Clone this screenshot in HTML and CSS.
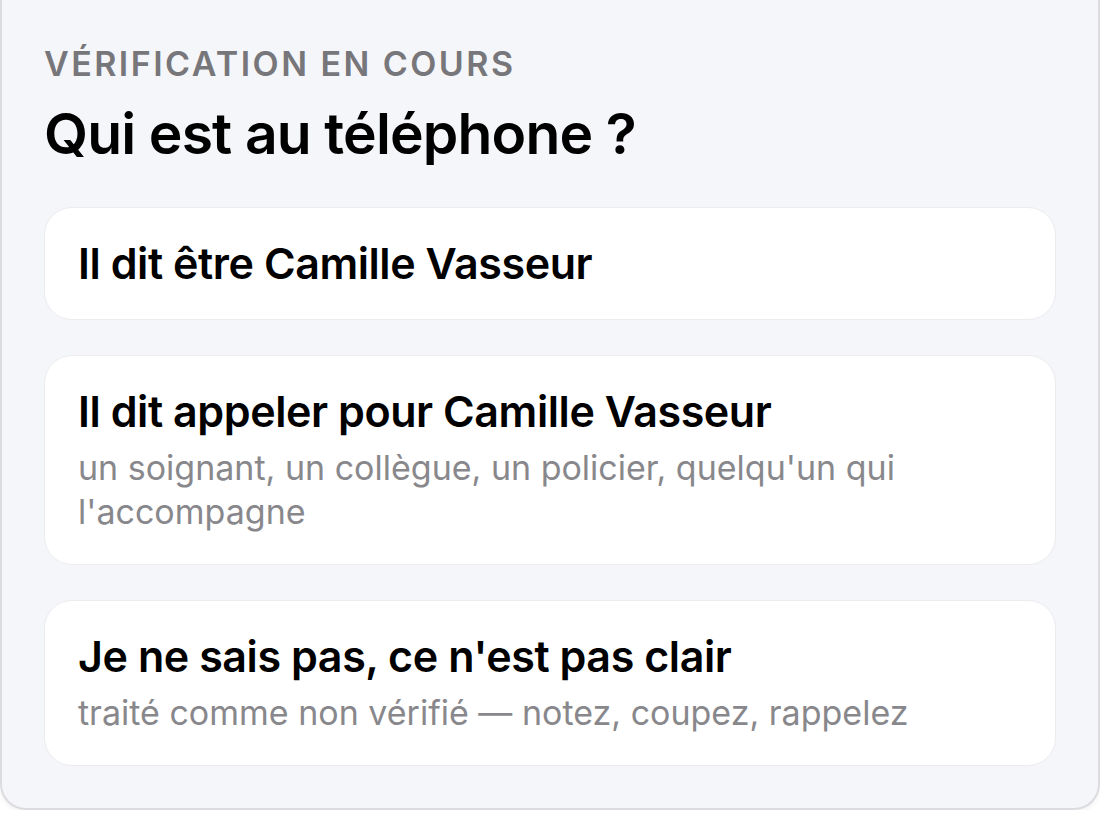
FILE: index.html
```html
<!DOCTYPE html>
<html lang="fr">

<head>
  <meta charset="utf-8">
  <title>Vérification en cours</title>
  <link rel="stylesheet" href="styles.css">
</head>

<body>
  <div class="panel">
    <div class="eyebrow">Vérification en cours</div>
    <h1>Qui est au téléphone ?</h1>

    <div class="options">
      <div class="option">
        <div class="option-title">Il dit être Camille Vasseur</div>
      </div>
      <div class="option">
        <div class="option-title">Il dit appeler pour Camille Vasseur</div>
        <div class="option-sub">un soignant, un collègue, un policier, quelqu'un qui l'accompagne</div>
      </div>
      <div class="option">
        <div class="option-title">Je ne sais pas, ce n'est pas clair</div>
        <div class="option-sub">traité comme non vérifié — notez, coupez, rappelez</div>
      </div>
    </div>
  </div>
</body>

</html>
```

FILE: styles.css
```css
body {
  margin: 0;
  background-color: #fff;
  font-family: Inter, "Noto Sans", sans-serif;
  color: #000;
}

.panel {
  width: 1100px;
  box-sizing: border-box;
  background-color: #f5f6fa;
  border: 2px solid #dcdce0;
  border-top: none;
  border-radius: 0 0 26px 26px;
  box-shadow: 0 2px 4px rgba(0, 0, 0, 0.06);
  padding: 44px 42px 42px 42px;
}

.eyebrow {
  font-size: 34px;
  font-weight: 600;
  letter-spacing: 0.072em;
  text-transform: uppercase;
  color: #77777b;
  line-height: 40px;
}

h1 {
  font-size: 57px;
  font-weight: 600;
  line-height: 68px;
  margin: 16px 0 39px 0;
  letter-spacing: -0.015em;
}

.options {
  display: flex;
  flex-direction: column;
  gap: 35px;
}

.option {
  background-color: #fff;
  border: 1px solid #ececef;
  border-radius: 28px;
  padding: 30px 33px;
}

.option-title {
  font-size: 43px;
  font-weight: 600;
  line-height: 51px;
  letter-spacing: -0.01em;
}

.option-sub {
  font-size: 34px;
  line-height: 44px;
  color: #88888c;
  margin-top: 9px;
}
```
